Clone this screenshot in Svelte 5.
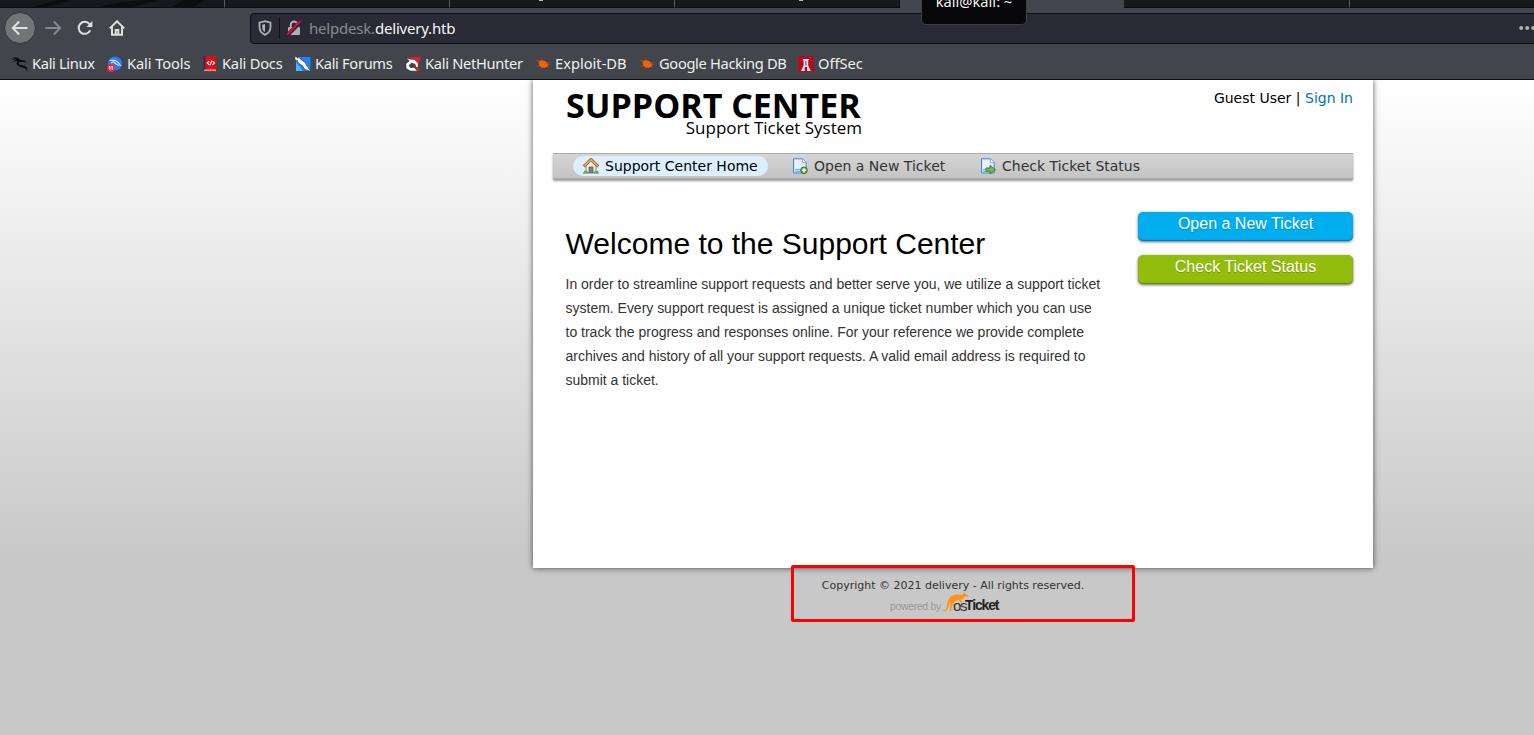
<script>
  const bookmarks = [
    { label: 'Kali Linux', icon: 'linux', width: 95, spacing: -0.33 },
    { label: 'Kali Tools', icon: 'tools', width: 95, spacing: -0.1 },
    { label: 'Kali Docs', icon: 'docs', width: 93, spacing: -0.2 },
    { label: 'Kali Forums', icon: 'forums', width: 110, spacing: -0.32 },
    { label: 'Kali NetHunter', icon: 'nethunter', width: 130, spacing: -0.3 },
    { label: 'Exploit-DB', icon: 'bug', width: 104, spacing: 0 },
    { label: 'Google Hacking DB', icon: 'bug', width: 159, spacing: -0.33 },
    { label: 'OffSec', icon: 'offsec', width: 70, spacing: 0 }
  ];
</script>

{#snippet dragon(color)}
  <path d="M1 1.2 5.5 1.8 9 4.2 13.5 4.6 11 6 7.4 5.9 6.4 8 9 9.3 12.8 9.7 15 12 15.6 15.4 13.2 12.2 9 11 5.4 9.6 4.4 7.2 5.5 5 2.5 4.9 4.7 3.7Z" fill={color} />
  <path d="M0 3.2 4 3M1.5 5.5 4.5 4.2M10 4.8 14.6 6.2" stroke={color} stroke-width=".9" fill="none" />
{/snippet}

{#snippet ticketPage()}
  <path d="M1.5.8H10.5L14.2 4.5V15H1.5Z" fill="#d9eafc" stroke="#4b83c4" />
  <path d="M10.5 1V4.5H14" fill="#fff" stroke="#7ba7d8" stroke-width=".8" />
  <path d="M3 2.2H9V10H3Z" fill="#e8f2ff" />
  <path d="M3 11.5H10M3 13.3H9" stroke="#5ebcf4" stroke-width="1.2" />
{/snippet}

<div class="screen">
  <header class="chrome">
    <div class="tabs">
      <span class="tab" style:width="224px">
        <svg width="224" height="8"><path d="M28 8 58 0H72L44 8M94 8Q120 1 150 0H160L128 8M170 8 184 0H205L192 8" fill="#0c0d10" /></svg>
      </span>
      <span class="tab" style:width="224px"></span>
      <span class="tab" style:width="224px"><i class="descender first"></i></span>
      <span class="tab" style:width="224px"><i class="descender second"></i></span>
      <span class="active"></span>
      <span class="tab" style:width="225px"></span>
      <span class="tab last"></span>
    </div>
    <div class="tooltip"><span>kali@kali: ~</span></div>

    <div class="toolbar">
      <div class="back">
        <svg width="18" height="18" viewBox="0 0 18 18"><path d="M16.5 9H2M8.2 2.5 1.8 9 8.2 15.5" /></svg>
      </div>
      <svg class="forward" width="18" height="18" viewBox="0 0 18 18"><path d="M1.5 9H16M9.8 2.5 16.2 9 9.8 15.5" /></svg>
      <svg class="tool reload" width="16" height="16" viewBox="0 0 16 16"><path d="M13.2 10.3A6 6 0 1 1 12.5 4.2" /><path class="fill" d="M15.4 1V7H9.4Z" /></svg>
      <svg class="tool" width="16" height="16" viewBox="0 0 16 16"><path d="M.8 8.4 8 1.3 15.2 8.4" /><path d="M3 7V14.8H13V7" /><path d="M6.7 15V10H9.3V15" stroke-width="1.4" /></svg>
      <div class="address">
        <svg class="shield" width="14" height="16" viewBox="0 0 14 16"><path d="M7 1.2 12.5 2.6V7C12.5 11 10.5 13.3 7 14.8 3.5 13.3 1.5 11 1.5 7V2.6Z" fill="none" stroke="#b0b1b5" stroke-width="1.8" /><path d="M7 4 4.2 4.8V7.4C4.2 9.4 5.2 11 7 12Z" fill="#b0b1b5" /></svg>
        <i class="divider"></i>
        <svg class="lock" width="16" height="16" viewBox="0 0 16 16"><path d="M4.8 8V4.8a3.2 3.2 0 0 1 6.4 0V8" fill="none" stroke="#b0b1b5" stroke-width="2" /><rect x="2" y="7" width="12" height="8" rx="1" fill="#b0b1b5" /><path d="M1.8 14.7 14.8 1.7" stroke="#292a35" stroke-width="4" /><path d="M1.2 14.3 14.4 1.1" stroke="#ff0039" stroke-width="1.8" /></svg>
        <span class="url">helpdesk.<b>delivery.htb</b></span>
        <svg class="more" width="15" height="6" viewBox="0 0 15 6"><circle cx="2.2" cy="3" r="2" /><circle cx="8.2" cy="3" r="2" /><circle cx="14.2" cy="3" r="2" /></svg>
      </div>
    </div>

    <nav class="bookmarks">
      {#each bookmarks as item}
        <span class="bookmark" style:width="{item.width}px">
          <svg width="16" height="16" viewBox="0 0 16 16">
            {#if item.icon === 'linux'}
              {@render dragon('#08090b')}
            {:else if item.icon === 'tools'}
              <circle cx="8" cy="7.5" r="7.1" fill="#2777ff" />
              <path d="M2.5 4.5Q7 3.5 10 5.5T13.5 10M4 7Q7.5 4.5 8 7.4L12 9.5" fill="none" stroke="#d8e8ff" stroke-width="1.2" />
              <circle cx="4" cy="12" r="3.9" fill="#ed2939" />
              <path d="M2.8 10.3V13.8M5.2 10.3V13.8M1.8 10.6H3M4.2 10.6H5.4" stroke="#fff" stroke-width="1" />
            {:else if item.icon === 'docs'}
              <path d="M1.6.3H4V15H1.6Z" fill="#17366c" /><path d="M3.4.3H14V13.7H3.4Z" fill="#e00d14" />
              <path d="M2 13.5H14V15.5H2Z" fill="#cbb9b7" /><path d="M2 15.3H13.8" stroke="#a51319" />
              <path d="M7.2 5.1 5.2 7 7.2 8.8M10.5 5.1 12.5 7 10.5 8.8M9.7 4.6 8 9.3" fill="none" stroke="#fff" stroke-width="1.1" />
            {:else if item.icon === 'forums'}
              <path d="M1 1H15.5V15H1Z" fill="#247ff5" /><path d="M1 6 8 15H1Z" fill="#45b7ff" />
              <path d="M0 0 3.2 2.4 3.4 0 5.5 3.2 10 6.4 12 10.1 15.8 15.8 9.2 12.8 7.6 9.8 3.1 6.8 2.4 4.4 0 4Z" fill="#fff" stroke="#171b22" stroke-width=".5" />
            {:else if item.icon === 'nethunter'}
              <path d="M3 1H16L12.5 9.5 15 15H6.5L11 8Z" fill="#e9182e" />
              <path d="M.8 1.2 4.5 3 9.7 3.6 13.3 7.6 13.2 11.4 11.2 11.6 10.1 8.4 6.9 6.9 4.1 9.2 5.3 11.6 9.2 11.4 12.6 15.2 5.4 15 1 12.4.9 7.4 4.2 4.9Z" fill="#fff" stroke="#101318" stroke-width=".5" />
            {:else if item.icon === 'bug'}
              <path d="M2.7 4.3 5 4.9 7.2 3.9 10.2 5.2 13.2 8.2 12.8 9.8 14 11.6 11.8 10.8 9.8 12 6.1 11.4 3.6 8.9 4.4 8.1 2.3 6.6 4.5 6.7Z" fill="#f4610b" />
              <path d="M5.5 2.5 7 4.5M1.6 11 5 9.3M5.3 13 7.3 11M10.5 5.6 15 7.2M12.5 8.4 15.7 9.2M4.2 5 .8 4.4" stroke="#a44d24" stroke-width=".8" />
            {:else}
              <path d="M0 0H16V16H0Z" fill="#af0d23" /><path d="M4.8 3H11V4.2H10.2V9.5L12.9 15H9.1V11H6.7V15H3L5.6 9.5V4.2H4.8Z" fill="#f6e5e8" /><path d="M7.4 5H8.4V9.5H7.4Z" fill="#af0d23" />
            {/if}
          </svg>
          <span style:letter-spacing="{item.spacing}px">{item.label}</span>
        </span>
      {/each}
    </nav>
  </header>

  <main class="page">
    <div class="container">
      <div class="head">
        <div class="logo">
          <div class="logo-title">SUPPORT CENTER</div>
          <div class="logo-sub">Support Ticket System</div>
        </div>
        <p class="account">Guest User | <a href="#signin">Sign In</a></p>
      </div>

      <nav class="menu">
        <a class="current" href="#home">
          <svg width="16" height="16" viewBox="0 0 16 16"><path d="M3 7.5V14.5H13V7.5L8 3Z" fill="#f0eee9" stroke="#8d8679" /><path d="M.7 8.3 8 1.6 15.3 8.3" fill="none" stroke="#a45c1e" stroke-width="3" /><path d="M1.2 7.9 8 1.8 14.8 7.9" fill="none" stroke="#dfac70" stroke-width="1.7" /><path d="M6 9H10V15H6Z" fill="#7e8286" stroke="#555" stroke-width=".7" /><path d="M0 15H5.5M10.5 15H16M1 13.5H4.5M11.5 13.5H15" stroke="#72a65e" stroke-width="1.3" /></svg>
          <span>Support Center Home</span>
        </a>
        <a class="new" href="#new">
          <svg width="16" height="16" viewBox="0 0 16 16">{@render ticketPage()}<circle cx="12" cy="12.3" r="3.3" fill="#72a93f" stroke="#3b7b22" /><path d="M12 10.2V14.4M9.9 12.3H14.1" stroke="#fff" stroke-width="1.4" /></svg>
          <span>Open a New Ticket</span>
        </a>
        <a class="status" href="#status">
          <svg width="16" height="16" viewBox="0 0 16 16">{@render ticketPage()}<path d="M6 10H10V7.5L15.5 11.7 10 15.8V13.3H6Z" fill="#79b84b" stroke="#39782a" stroke-width=".9" /></svg>
          <span>Check Ticket Status</span>
        </a>
      </nav>

      <div class="content">
        <article>
          <h1>Welcome to the Support Center</h1>
          <p>In order to streamline support requests and better serve you, we utilize a support ticket<br />system. Every support request is assigned a unique ticket number which you can use<br />to track the progress and responses online. For your reference we provide complete<br />archives and history of all your support requests. A valid email address is required to<br />submit a ticket.</p>
        </article>
        <aside>
          <a class="button blue" href="#new">Open a New Ticket</a>
          <a class="button green" href="#status">Check Ticket Status</a>
        </aside>
      </div>
    </div>

    <footer>
      <p>Copyright © 2021 delivery - All rights reserved.</p>
      <div class="powered">
        <span class="by">powered by</span>
        <svg class="kangaroo" width="28" height="22" viewBox="0 0 28 22"><path d="M.6 19.3C4.4 19.3 4.9 16.5 5.4 12.7 6 7.2 9.5 3.6 14.5 3.4 17.5 3.4 19.2 4.2 21 3.5L21.6.8 23 2.6 26.4 4.7 25.8 5.7 22.8 5.4C21.8 7.8 20.6 8 18.8 8.2L20.2 11.2 19 11.5 16.6 8.4C14.8 9.5 13.2 9.6 12 11.5L10.6 14.3 8.8 18.4 11.4 19.8H7.4L8.6 14.7 8 10.6C7.1 13.3 7.2 16 5.6 18.2 4.6 19.9 2.5 20.6.6 20Z" fill="#ff9418" /></svg>
        <span class="os">os</span><span class="ticket">Ticket</span>
      </div>
    </footer>
    <div class="highlight"></div>
  </main>
</div>

<style>
  :global(body) { margin: 0; overflow: hidden; }
  * { box-sizing: border-box; }
  a { text-decoration: none; color: inherit; }
  p, h1 { margin: 0; }
  svg { display: block; flex: none; }
  .screen { width: 1534px; height: 735px; display: flex; flex-direction: column; overflow: hidden; position: relative; }
  .chrome { height: 80px; flex: none; background: #42454b; border-bottom: 1px solid #0d0d12; font-family: "Noto Sans", sans-serif; }
  .tabs { height: 8px; display: flex; background: #42454b; }
  .tab { background: #17181d; border-bottom: 1px solid #0c0d12; border-right: 1px solid #56585e; box-sizing: content-box; height: 7px; flex: none; }
  .tab:nth-child(4) { border-right-color: #0c0d12; }
  .active { width: 224px; flex: none; }
  .last { flex: 1; border-right: 0; }
  .descender { display: block; width: 4px; height: 1px; background: #bcbdbe; }
  .first { margin-left: 89px; }
  .second { margin-left: 124px; }
  .tooltip { position: absolute; left: 921px; top: -20px; width: 106px; height: 45px; z-index: 2; background: #08080a; border: 1px solid #3d3f45; border-radius: 5px; color: #f3f3f3; font-size: 14.67px; line-height: 20px; text-align: center; padding-top: 10px; }
  .toolbar { height: 40px; display: flex; align-items: center; }
  .back { width: 32px; height: 32px; flex: none; border-radius: 50%; margin-left: 4px; background: #737477; border: 1px solid #343539; display: grid; place-items: center; }
  .back path, .forward path, .tool path { fill: none; stroke: #e0e0de; stroke-width: 2; }
  .forward { margin-left: 8px; }
  .forward path { stroke: #85878b; }
  .tool { margin-left: 16px; }
  .tool .fill { fill: #e0e0de; stroke: none; }
  .reload { margin-left: 15px; }
  .address { width: 1294px; height: 31px; margin-left: 125px; flex: none; background: #292a35; border: 1px solid #0d0e14; border-radius: 4px; display: flex; align-items: center; }
  .shield { margin-left: 7px; }
  .divider { width: 1px; height: 22px; background: #11121a; margin-left: 7px; }
  .lock { margin-left: 6px; }
  .url { margin-left: 7px; color: #8a8b91; font-size: 15px; letter-spacing: -.2px; line-height: 26px; width: 160px; white-space: nowrap; }
  .url b { color: #f5f5f5; font-weight: 400; }
  .more { margin-left: 1050px; fill: #b1b1b3; }
  .bookmarks { height: 31px; display: flex; align-items: center; padding-left: 12px; }
  .bookmark { display: flex; gap: 4px; flex: none; color: #f0f0ee; font-size: 14.67px; line-height: 22px; white-space: nowrap; }
  .bookmark svg { margin-top: 3px; }
  .bookmark span { margin-top: -1px; }
  .page { height: 655px; background: linear-gradient(#fff 0, #c8c8c8 480px); position: relative; }
  .container { margin-left: 533px; width: 840px; height: 488px; background: #fff; box-shadow: 0 0 6px rgba(0, 0, 0, .65); clip-path: inset(0 -12px -12px); padding: 0 20px; }
  .head { height: 73px; display: flex; justify-content: space-between; }
  .logo { width: 296px; margin-left: 13px; padding-top: 7px; font-family: "Open Sans", sans-serif; color: #000; white-space: nowrap; }
  .logo-title { font-size: 34px; line-height: 36px; font-weight: 700; }
  .logo-sub { font-size: 17px; line-height: 20px; text-align: right; margin-top: -5px; }
  .account { font: 14px/20px "DejaVu Sans", sans-serif; padding-top: 8px; color: #000; }
  .account a { color: #0072bc; }
  .menu { height: 26px; display: flex; align-items: flex-start; padding: 2px 0 0 20px; background: linear-gradient(#d5d5d5, #c3c3c3); border-top: 1px solid #aaa; box-shadow: 0 2px 2px rgba(0, 0, 0, .4), inset 0 -1px 1px #aaa; font: 14px/20px "DejaVu Sans", sans-serif; color: #333; }
  .menu a { display: flex; align-items: center; gap: 6px; padding-left: 10px; height: 20px; white-space: nowrap; }
  .current { width: 195px; background: #dbefff; border-radius: 20px; color: #000; }
  .new { width: 173px; margin-left: 14px; }
  .status { margin-left: 15px; }
  .content { display: flex; padding-top: 33px; }
  article { width: 585px; padding-left: 12.6px; font-family: "Liberation Sans", sans-serif; }
  h1 { margin-top: 14px; font-size: 30px; line-height: 36px; font-weight: 400; color: #000; white-space: nowrap; }
  article p { margin-top: 10px; font-size: 14px; letter-spacing: -.018px; line-height: 24px; color: #333; white-space: nowrap; }
  aside { width: 215px; display: flex; flex-direction: column; gap: 14px; }
  .button { height: 29px; border-radius: 5px; text-align: center; color: #fff; font: 16px/24px "Liberation Sans", sans-serif; text-shadow: 0 1px 1px rgba(0, 0, 0, .2); box-shadow: 0 1px 3px rgba(0, 0, 0, .6), inset 0 -1px 1px rgba(0, 0, 0, .3); }
  .blue { background: #00aef0; }
  .green { background: #92bd0b; }
  footer { margin-left: 533px; width: 840px; padding-top: 11px; text-align: center; color: #333; font: 11px/14px "DejaVu Sans", sans-serif; }
  .powered { margin: -2px 0 0 357px; height: 22px; display: flex; align-items: flex-end; font-family: "Liberation Sans", sans-serif; }
  .by { font-size: 10.5px; letter-spacing: -.35px; line-height: 14px; color: #999; width: 52px; white-space: nowrap; text-align: left; }
  .os { margin-left: -17px; font-size: 15px; line-height: 15px; letter-spacing: -1.3px; width: 12px; }
  .ticket { font-size: 14px; line-height: 15px; font-weight: 700; letter-spacing: -1.15px; color: #222; }
  .highlight { position: absolute; left: 791px; top: 485px; width: 344px; height: 57px; border: 3px solid #fe0000; border-radius: 2px; }
</style>
